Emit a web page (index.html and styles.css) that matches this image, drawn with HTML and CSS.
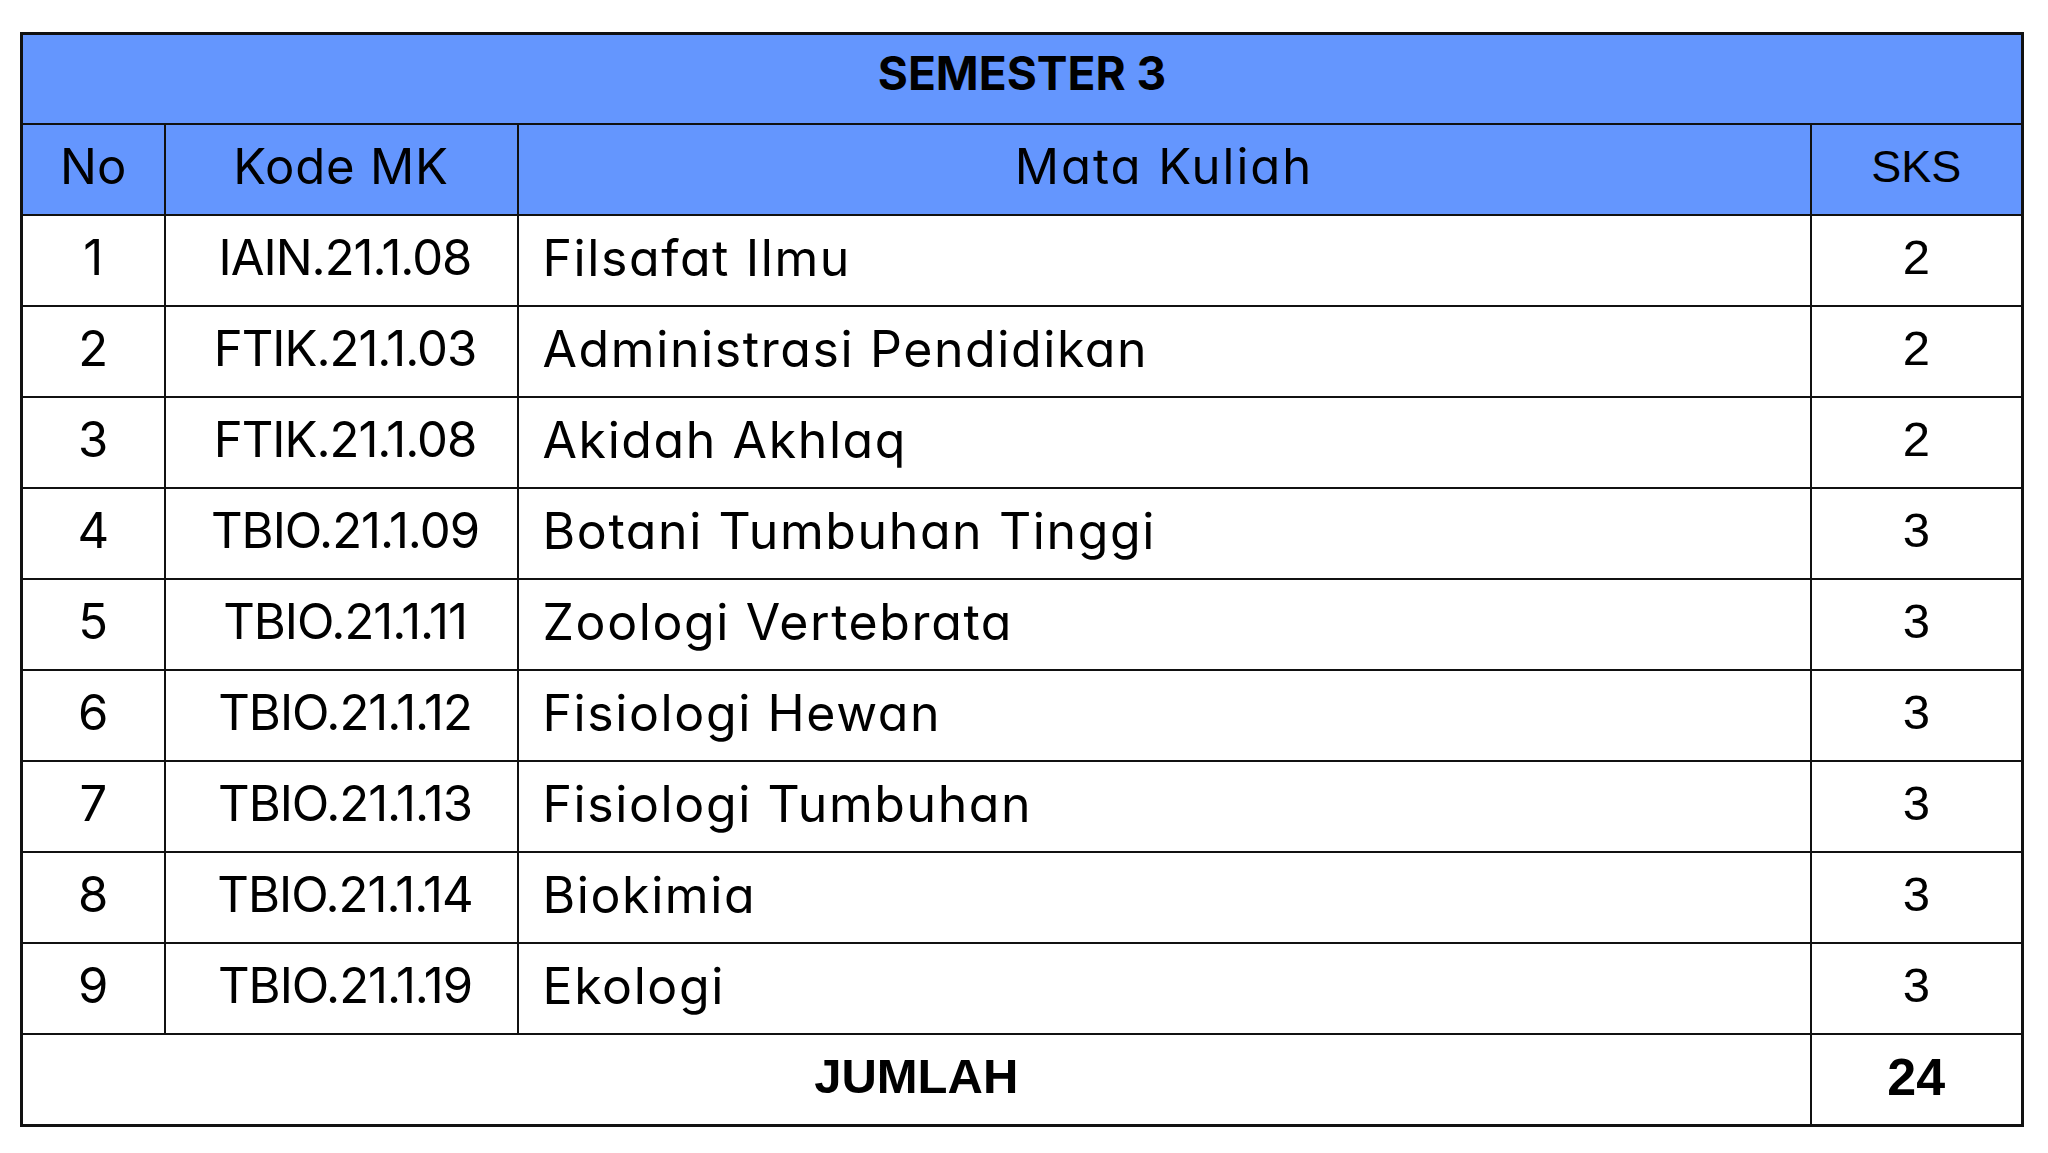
FILE: index.html
```html
<!DOCTYPE html>
<html lang="id">
<head>
<meta charset="utf-8">
<title>Semester 3</title>
<link rel="stylesheet" href="styles.css">
</head>
<body>
<table class="mk">
  <colgroup>
    <col class="c-no">
    <col class="c-kode">
    <col class="c-nama">
    <col class="c-sks">
  </colgroup>
  <thead>
    <tr class="title-row"><th colspan="4" class="title">SEMESTER 3</th></tr>
    <tr class="head-row">
      <th>No</th>
      <th class="kh">Kode MK</th>
      <th class="mh">Mata Kuliah</th>
      <th class="arial">SKS</th>
    </tr>
  </thead>
  <tbody>
    <tr><td class="ctr">1</td><td class="kode">IAIN.21.1.08</td><td class="nama">Filsafat Ilmu</td><td class="sks">2</td></tr>
    <tr><td class="ctr">2</td><td class="kode">FTIK.21.1.03</td><td class="nama">Administrasi Pendidikan</td><td class="sks">2</td></tr>
    <tr><td class="ctr">3</td><td class="kode">FTIK.21.1.08</td><td class="nama">Akidah Akhlaq</td><td class="sks">2</td></tr>
    <tr><td class="ctr">4</td><td class="kode">TBIO.21.1.09</td><td class="nama">Botani Tumbuhan Tinggi</td><td class="sks">3</td></tr>
    <tr><td class="ctr">5</td><td class="kode">TBIO.21.1.11</td><td class="nama">Zoologi Vertebrata</td><td class="sks">3</td></tr>
    <tr><td class="ctr">6</td><td class="kode">TBIO.21.1.12</td><td class="nama">Fisiologi Hewan</td><td class="sks">3</td></tr>
    <tr><td class="ctr">7</td><td class="kode">TBIO.21.1.13</td><td class="nama">Fisiologi Tumbuhan</td><td class="sks">3</td></tr>
    <tr><td class="ctr">8</td><td class="kode">TBIO.21.1.14</td><td class="nama">Biokimia</td><td class="sks">3</td></tr>
    <tr><td class="ctr">9</td><td class="kode">TBIO.21.1.19</td><td class="nama">Ekologi</td><td class="sks">3</td></tr>
  </tbody>
  <tfoot>
    <tr><td colspan="3" class="total">JUMLAH</td><td class="total big">24</td></tr>
  </tfoot>
</table>
</body>
</html>
```

FILE: styles.css
```css
html, body {
  margin: 0;
  padding: 0;
  background: #ffffff;
}

body {
  padding: 32px 0 0 20px;
  font-family: Inter, "Noto Sans", sans-serif;
  font-feature-settings: "cv11" 1;
  color: #000;
}

.mk {
  border-collapse: collapse;
  table-layout: fixed;
  width: 2001px;
  border: 3px solid #111;
}

.c-no { width: 143px; }
.c-kode { width: 353px; }
.c-nama { width: 1293px; }
.c-sks { width: 212px; }

.mk th,
.mk td {
  border: 2px solid #111;
  height: 83px;
  padding: 0 0 6px;
  vertical-align: middle;
  font-size: 49px;
  font-weight: 400;
  line-height: 1;
}

.mk thead th {
  background: #6496fe;
  text-align: center;
}

.mk th.title {
  font-weight: 700;
  font-size: 46px;
  padding-bottom: 12px;
  height: 76px;
}

.mk th.kh {
  letter-spacing: 0.8px;
}

.mk th.mh {
  letter-spacing: 2px;
}

.arial,
.mk td.sks,
.mk td.total {
  font-family: "Liberation Sans", Arial, sans-serif;
}

.mk th.arial {
  font-size: 45px;
}

.ctr {
  text-align: center;
}

.mk td.kode {
  text-align: center;
  letter-spacing: -1px;
  padding-left: 8px;
}

.mk td.nama {
  text-align: left;
  padding-left: 24px;
  font-size: 50px;
  letter-spacing: 1.6px;
}

.mk td.sks {
  text-align: center;
  font-size: 49px;
}

.mk td.total {
  text-align: center;
  font-weight: 700;
  font-size: 49px;
}

.mk td.big {
  font-size: 52px;
}
```
